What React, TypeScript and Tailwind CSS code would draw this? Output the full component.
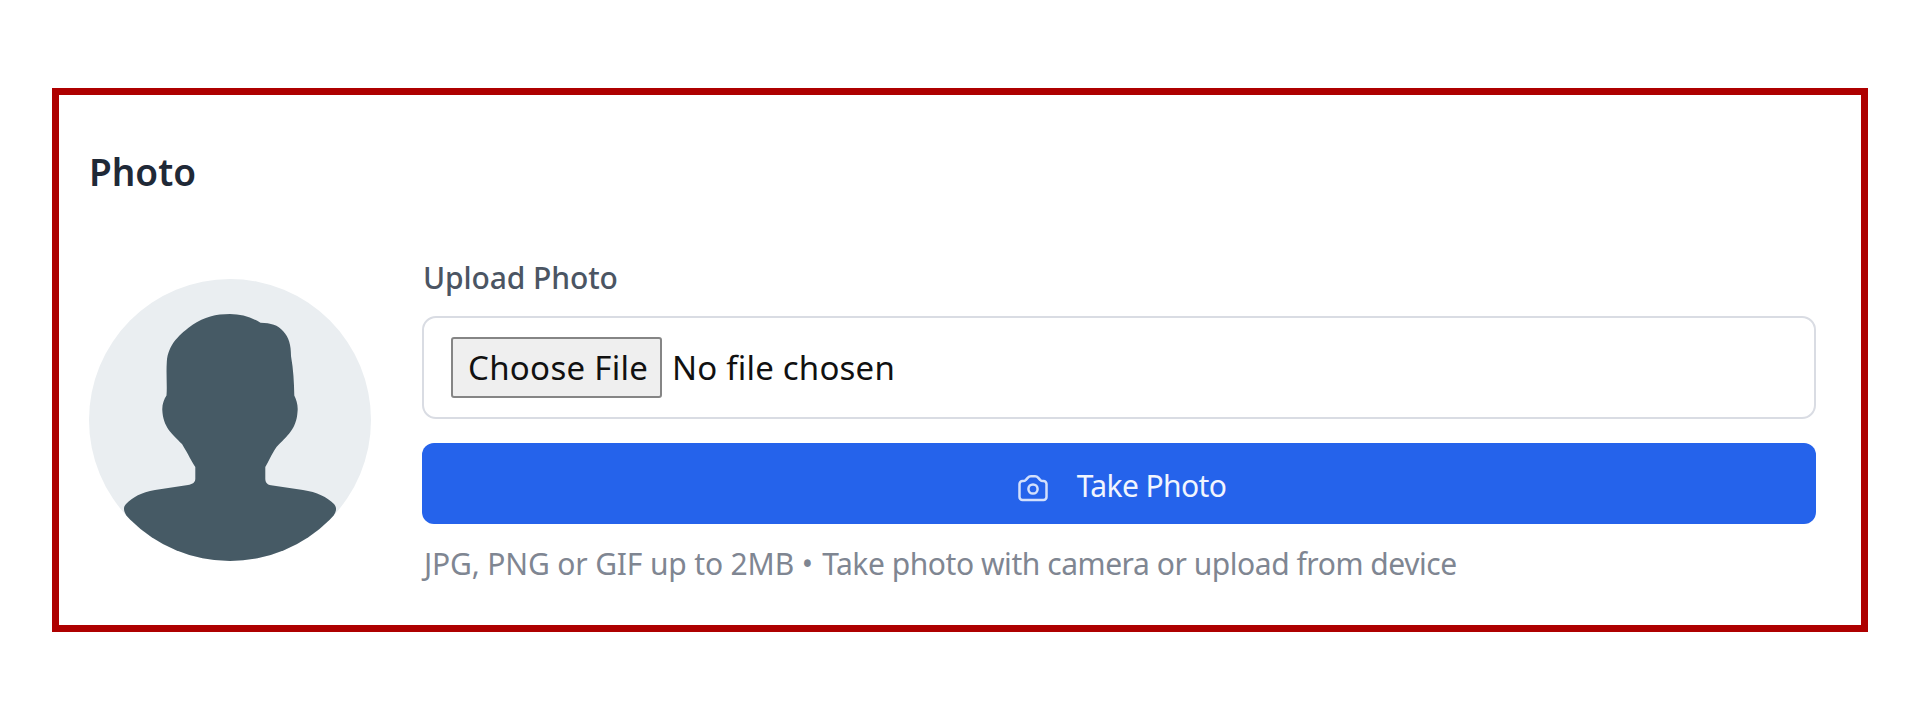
import React from "react";

function Avatar() {
  return (
    <svg viewBox="0 0 282 282" className="mt-[30px] h-[282px] w-[282px] shrink-0" role="img">
      <defs>
        <clipPath id="avatar-circle">
          <circle cx="141" cy="141" r="141" />
        </clipPath>
      </defs>
      <circle cx="141" cy="141" r="141" fill="#eaeef1" />
      <path
        clipPath="url(#avatar-circle)"
        fill="#465a65"
        d="M141 35C152 35 162 38 171.500 43.700C182 44 189 46 194 52C200 58.500 202 66 202 77C204.500 91 205 103 205.300 116.500C207.500 121 209.300 127 208.500 133C207.500 150 198 157 187.500 168C182 176 179 184 176.300 188L176.300 200C176.500 204 179 206 182 206.300L214 211C228 213 238 218 245 225C247.500 228 247.800 231 245.500 235C236 262 200 290 141 290C82 290 46 262 36.500 235C34.500 231 34.300 228 37 225C44 218 52 213.500 66 211L99 206C103 205.300 106 204 106.300 200L106.300 188C103 183 99 175 93 165C83 155 74 148 73.300 131C73 126 75 120 77.500 116.500C78.300 106 77 96 77.800 83C79 65 91 55 104 45.500C115 38 127 35 141 35Z"
      />
    </svg>
  );
}

function CameraIcon() {
  return (
    <svg
      viewBox="0 0 36 36"
      className="mt-[9px] h-[36px] w-[36px] shrink-0"
      fill="none"
      stroke="#d3e0fc"
      strokeWidth="2.5"
      strokeLinecap="round"
      strokeLinejoin="round"
    >
      <path d="M4.500 14a3 3 0 0 1 3-3h.6c1.100 0 2-.4 2.800-1.200l1.800-2c.9-1 1.900-1.500 3.200-1.500h4.200c1.300 0 2.300.5 3.200 1.500l1.800 2c.8.8 1.700 1.200 2.800 1.200h.6a3 3 0 0 1 3 3v13a3 3 0 0 1-3 3h-21a3 3 0 0 1-3-3z" />
      <circle cx="18" cy="19" r="4.600" />
    </svg>
  );
}

export default function App() {
  return (
    <div className="h-[720px] w-full bg-white pt-[88px] pl-[52px] font-['Noto_Sans',sans-serif]">
      <section className="h-[544px] w-[1816px] border-[7px] border-[#ae0000] pt-[55px] pl-[30px]">
        <h2 className="text-[37px] leading-[44px] font-semibold text-[#1f2937]">Photo</h2>
        <div className="mt-[55px] flex gap-[51px]">
          <Avatar />
          <div className="flex w-[1394px] flex-col pt-[9px]">
            <label className="pl-px text-[30px] leading-[40px] font-medium tracking-[-0.1px] text-[#4b5563]">Upload Photo</label>
            <div className="mt-[18px] flex h-[103px] items-center rounded-[14px] border-2 border-[#d9dce3] pb-px pl-[27px]">
              <button className="h-[61px] w-[211px] rounded-[3px] border-2 border-[#858585] bg-[#efefef] pl-[15px] text-left text-[33px] leading-[57px] tracking-[0.3px] whitespace-nowrap text-[#111]">
                Choose File
              </button>
              <span className="ml-[10px] text-[33px] leading-[57px] tracking-[0.2px] text-[#111]">No file chosen</span>
            </div>
            <button className="mt-[24px] flex h-[81px] items-center justify-center gap-[26px] rounded-[12px] bg-[#2563eb] pl-[3px] text-[#f1f5fe]">
              <CameraIcon />
              <span className="mt-[5px] text-[30px] leading-[40px] tracking-[-0.6px]">Take Photo</span>
            </button>
            <p className="mt-[20px] pl-[2px] text-[30px] leading-[40px] tracking-[-0.45px] whitespace-nowrap text-[#7f8692]">
              <span className="tracking-[-0.15px]">JPG, PNG or GIF up to 2MB </span>
              <span className="tracking-[0.7px]">• </span>
              Take photo with camera or upload from device
            </p>
          </div>
        </div>
      </section>
    </div>
  );
}
